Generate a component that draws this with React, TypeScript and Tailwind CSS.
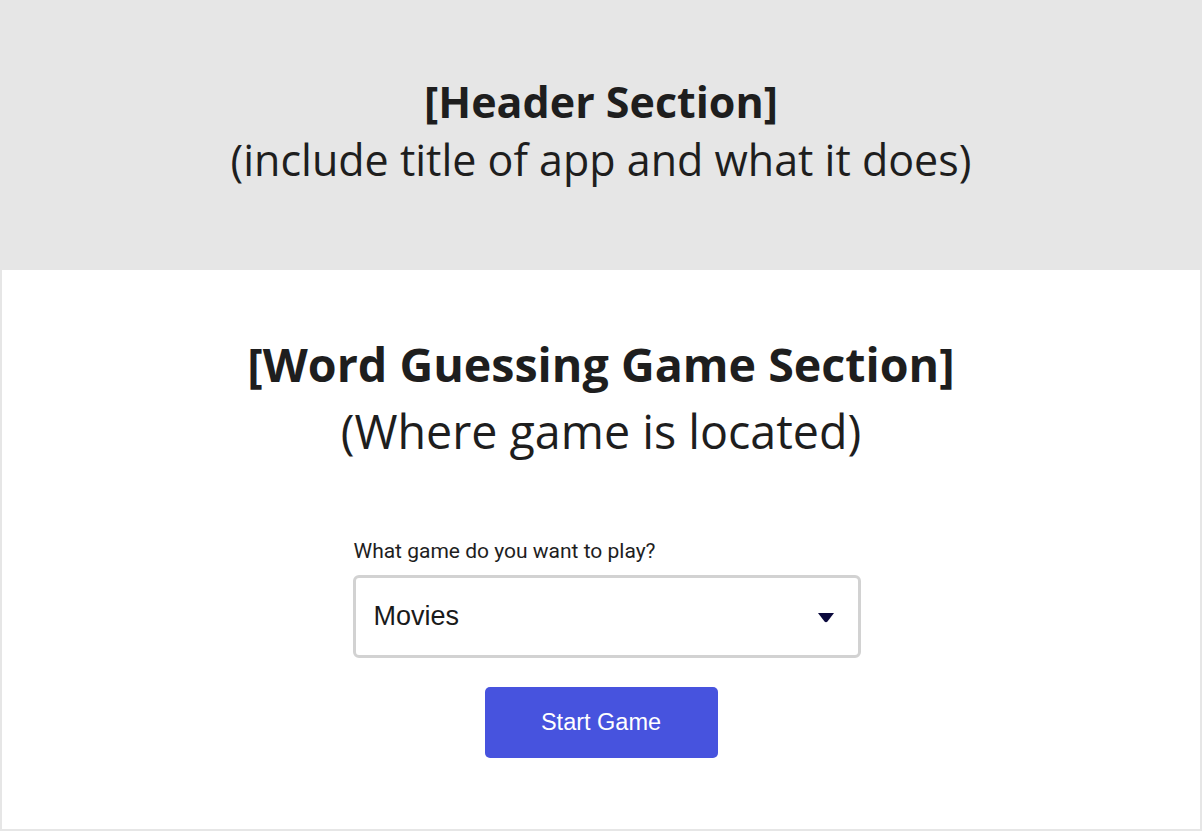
export default function App() {
  return (
    <div className="min-h-[831px] w-full bg-[#e6e6e6] flex flex-col" style={{ fontFamily: '"Open Sans", sans-serif' }}>
      {/* Header */}
      <header className="h-[270px] pb-[8px] flex flex-col items-center justify-center text-[#1e1e1e]">
        <h1 className="text-[43px] font-bold leading-[58px]">[Header Section]</h1>
        <p className="text-[43px] leading-[58px]">(include title of app and what it does)</p>
      </header>

      {/* Game section */}
      <main className="mx-[2px] mb-[2px] flex-1 bg-white flex flex-col items-center pt-[61px] text-[#1e1e1e]">
        <h2 className="text-[46.6px] font-bold leading-[67px]">[Word Guessing Game Section]</h2>
        <p className="text-[46.6px] leading-[67px]">(Where game is located)</p>

        <div className="mt-[74px] ml-[11px] w-[508px] flex flex-col font-['Roboto',sans-serif]">
          <label className="text-[21px] text-[#1e1e1e] leading-6 ml-[1px]">What game do you want to play?</label>
          <div className="mt-[12px] h-[83px] rounded-[6px] border-[3px] border-[#d2d2d2] flex items-center justify-between pl-[18px] pr-[24px]">
            <span className="text-[27px] text-[#1a1a1a] font-['Liberation_Sans',sans-serif]">Movies</span>
            <svg width="16" height="10" viewBox="0 0 16 10" className="mt-[2px]">
              <path d="M0 0 H16 L9.5 8.5 Q8 10 6.5 8.5 Z" fill="#0b0a3d" />
            </svg>
          </div>
        </div>

        <button className="mt-[29px] w-[233px] h-[71px] rounded-[5px] bg-[#4753de] text-white text-[23.5px] font-['Liberation_Sans',sans-serif]">
          Start Game
        </button>
      </main>
    </div>
  );
}
